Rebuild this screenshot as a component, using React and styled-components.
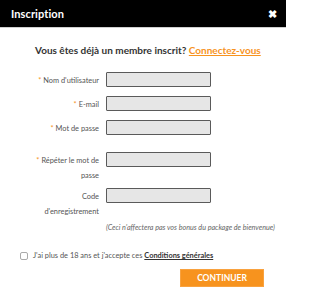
import React from "react";
import styled, { createGlobalStyle } from "styled-components";

const Global = createGlobalStyle`
  html, body { margin: 0; padding: 0; background: #fff; }
  body { font-family: Lato, "Noto Sans", sans-serif; width: 286px; height: 300px; overflow: hidden; }
  * { box-sizing: border-box; }
`;

const Modal = styled.div`
  width: 286px;
  height: 300px;
  background: #fff;
  display: flex;
  flex-direction: column;
`;

const Header = styled.div`
  height: 28px;
  background: #000;
  border-bottom: 1px solid #cfcfcf;
  display: flex;
  align-items: center;
  justify-content: space-between;
  padding: 0 9px 0 11px;
`;

const Title = styled.h1`
  margin: 0;
  color: #fff;
  font-size: 11px;
  font-weight: 700;
  letter-spacing: 0.1px;
`;

const Close = styled.span`
  color: #fff;
  font-size: 11px;
  font-weight: 900;
  line-height: 1;
`;

const Body = styled.div`
  display: flex;
  flex-direction: column;
  padding: 15px 22px 0 0;
`;

const Lead = styled.p`
  margin: 0 0 14px 0;
  padding-left: 35px;
  font-size: 10px;
  font-weight: 700;
  color: #333;
  line-height: 15px;
  white-space: nowrap;
`;

const Link = styled.a`
  color: ${p => p.$orange ? "#f7931e" : "#333"};
  text-decoration: underline;
  font-weight: 700;
  cursor: pointer;
`;

const Row = styled.div`
  display: grid;
  grid-template-columns: 99px 105px;
  column-gap: 7px;
  align-items: start;
  margin-bottom: ${p => p.$mb}px;
`;

const Label = styled.label`
  justify-self: end;
  max-width: 65px;
  text-align: right;
  font-size: 7.4px;
  line-height: 15px;
  color: #555;
  padding-top: 1px;
`;

const Star = styled.span`
  color: #f7931e;
  margin-right: 2px;
`;

const Input = styled.div`
  height: 15px;
  background: #e6e6e6;
  border: 1.5px solid #5a5a5a;
  border-radius: 1px;
`;

const Note = styled.p`
  margin: 4px 0 0 106px;
  font-size: 7.2px;
  font-style: italic;
  color: #666;
  white-space: nowrap;
  line-height: 10px;
`;

const CheckRow = styled.div`
  display: flex;
  align-items: center;
  gap: 5px;
  margin: 18px 0 0 20px;
  font-size: 7.4px;
  color: #555;
  line-height: 10px;
`;

const Box = styled.span`
  width: 8px;
  height: 8px;
  border: 1px solid #aaa;
  border-radius: 2px;
  background: #fff;
`;

const Actions = styled.div`
  display: flex;
  justify-content: flex-end;
  margin-top: 8px;
`;

const Button = styled.button`
  width: 84px;
  height: 18px;
  background: #f7931e;
  border: 1px solid #f9a23f;
  color: #fff;
  font-family: Lato, "Noto Sans", sans-serif;
  font-weight: 700;
  font-size: 8.5px;
  padding: 0;
  cursor: pointer;
`;

export default function App() {
  return (
    <>
      <Global />
      <Modal>
        <Header>
          <Title>Inscription</Title>
          <Close>✖</Close>
        </Header>
        <Body>
          <Lead>
            Vous êtes déjà un membre inscrit? <Link $orange>Connectez-vous</Link>
          </Lead>
          <Row $mb={8}>
            <Label><Star>*</Star>Nom d'utilisateur</Label>
            <Input />
          </Row>
          <Row $mb={8}>
            <Label><Star>*</Star>E-mail</Label>
            <Input />
          </Row>
          <Row $mb={16}>
            <Label><Star>*</Star>Mot de passe</Label>
            <Input />
          </Row>
          <Row $mb={5}>
            <Label><Star>*</Star>Répéter le mot de passe</Label>
            <Input />
          </Row>
          <Row $mb={0}>
            <Label>Code d'enregistrement</Label>
            <Input />
          </Row>
          <Note>(Ceci n'affectera pas vos bonus du package de bienvenue)</Note>
          <CheckRow>
            <Box />
            <span>J'ai plus de 18 ans et j'accepte ces <Link>Conditions générales</Link></span>
          </CheckRow>
          <Actions>
            <Button>CONTINUER</Button>
          </Actions>
        </Body>
      </Modal>
    </>
  );
}
